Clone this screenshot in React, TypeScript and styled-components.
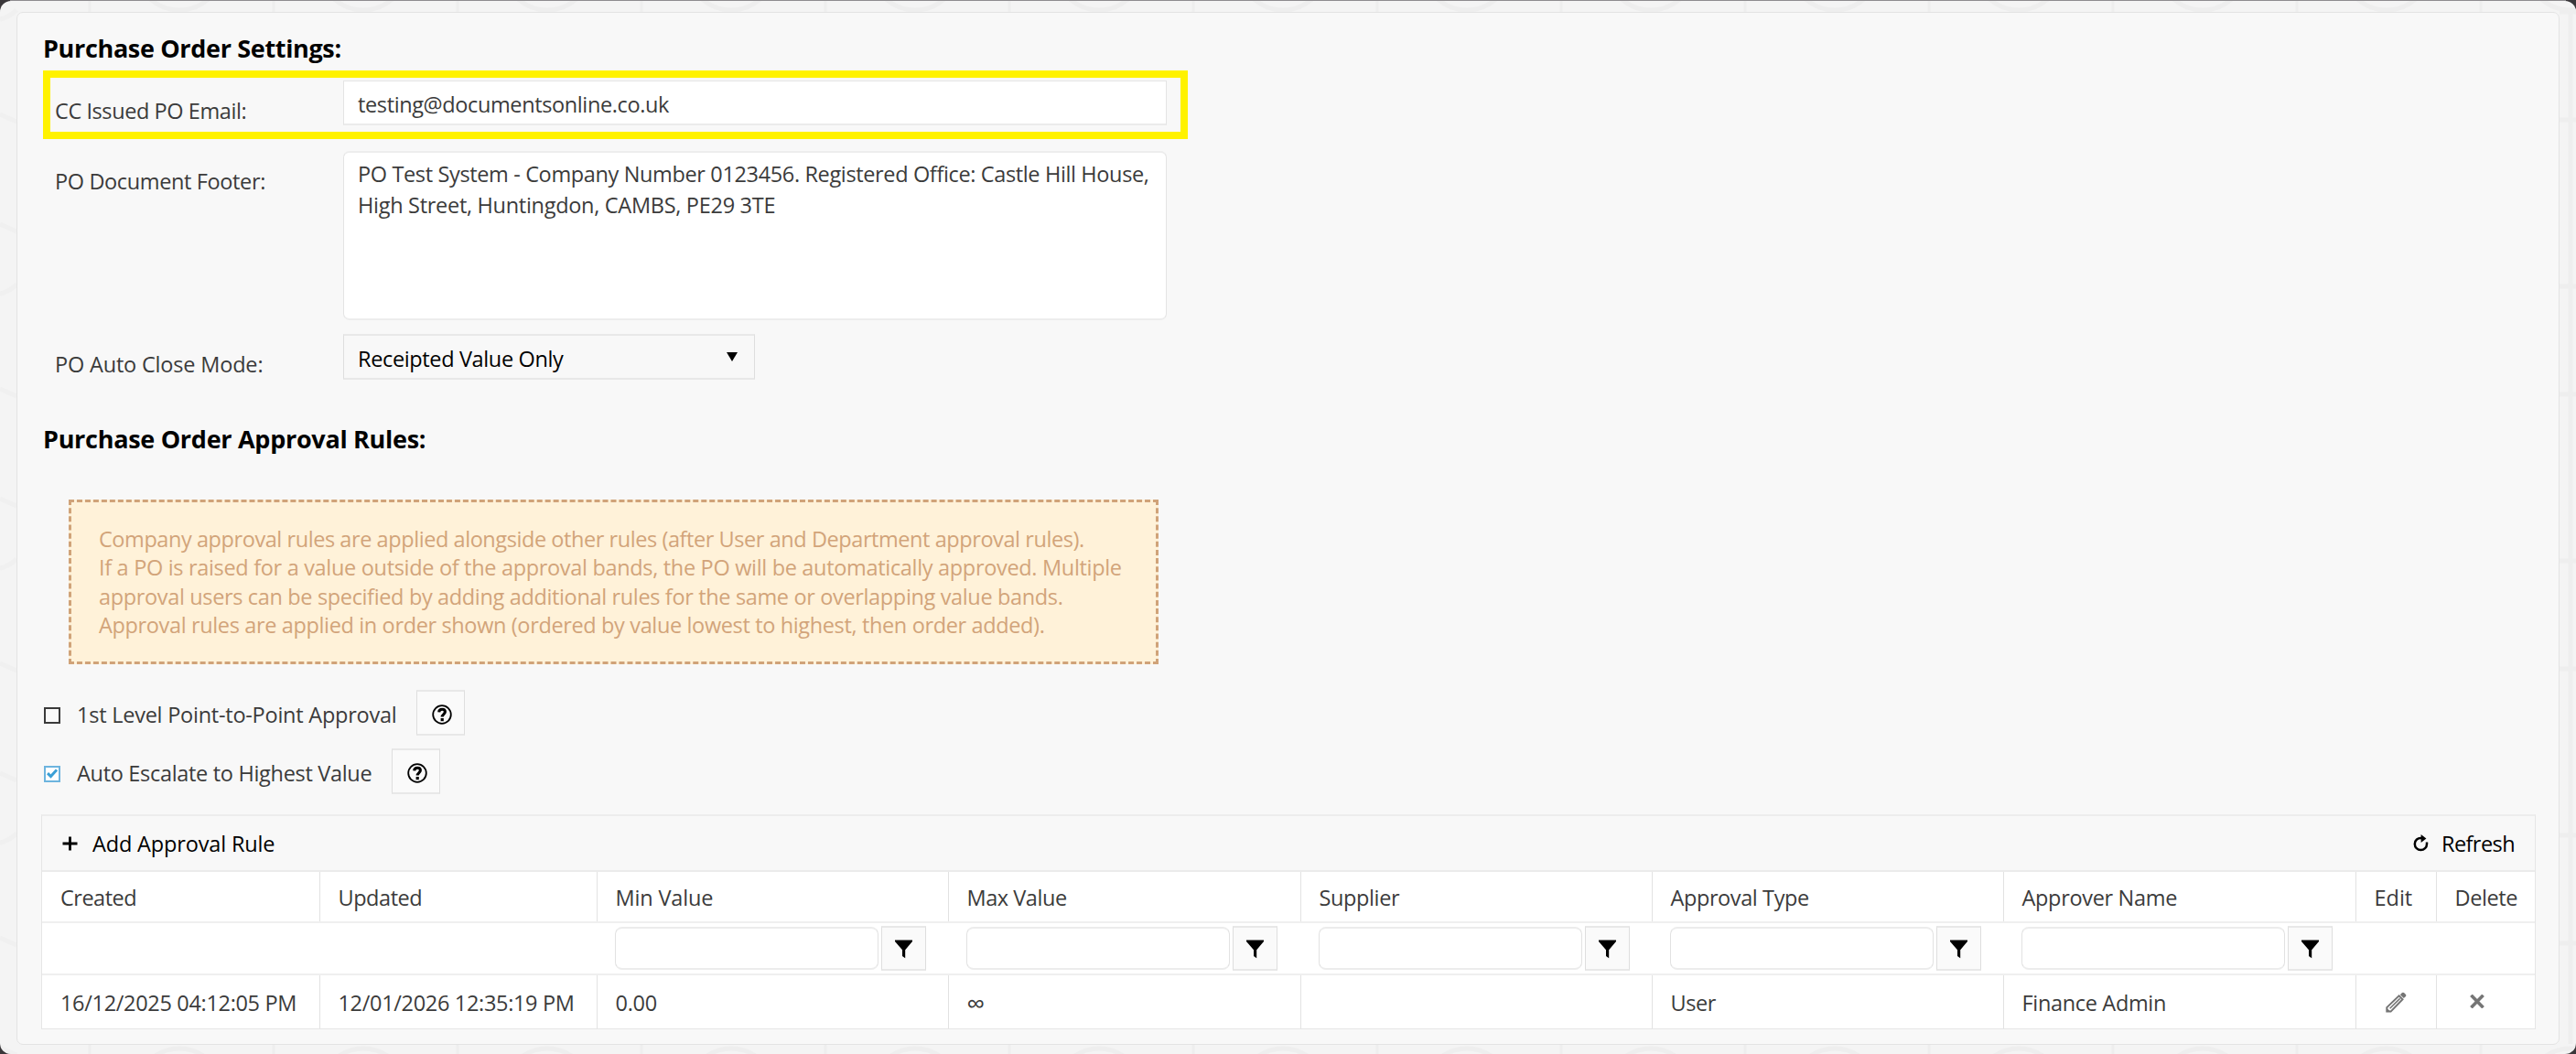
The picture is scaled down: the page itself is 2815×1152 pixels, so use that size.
import React from "react";
import styled, { createGlobalStyle } from "styled-components";

const GlobalStyle = createGlobalStyle`
  *, *::before, *::after { box-sizing: border-box; }
  body {
    margin: 0;
    background: #3a373a;
    color: #3b3b3b;
    font-family: "Open Sans", "Noto Sans", sans-serif;
    font-size: 23.5px;
    line-height: 32px;
    font-kerning: normal;
  }
`;

const Page = styled.div`
  height: 1152px;
  overflow: hidden;
  background: linear-gradient(#8e8c8f 1px, transparent 1px) 11px 0 / calc(100% - 22px) 100% no-repeat;
  padding-top: 1px;
`;

const Shell = styled.div`
  position: relative;
  height: 1151px;
  padding: 12px 18px 10px;
  border-radius: 12px;
  background: #f4f4f4;
  overflow: hidden;
`;

const Pattern = styled.svg`
  position: absolute;
  inset: 0;
  width: 100%;
  height: 100%;
`;

const Panel = styled.main`
  position: relative;
  height: 1129px;
  padding: 21px 25px 0 26px;
  border: 1px solid #e3e3e3;
  border-radius: 7px;
  background: #f8f8f8;
`;

const Txt = styled.span<{ $ls?: number }>`
  letter-spacing: ${(p) => p.$ls ?? -0.3}px;
  white-space: nowrap;
`;

const Infinite = styled(Txt)`
  font-family: "Noto Sans", "Open Sans", sans-serif;
  font-size: 28px;
`;

const Heading = styled.h2<{ $ls: number }>`
  margin: 0 0 0 2px;
  height: 36px;
  font-size: 27px;
  line-height: 36px;
  font-weight: 700;
  letter-spacing: ${(p) => p.$ls}px;
  color: #000;
`;

const FormRow = styled.div<{ $gap: number; $drop: number }>`
  display: grid;
  grid-template-columns: 315px max-content;
  align-items: start;
  margin-top: ${(p) => p.$gap}px;
  padding-left: 15px;

  > label {
    margin-top: ${(p) => p.$drop}px;
  }
`;

const HighlightRow = styled(FormRow)`
  width: 1251px;
  height: 75px;
  margin-left: 2px;
  padding: 3px 0 0 5px;
  border: 8px solid #fff200;
`;

const Field = styled.div`
  display: flex;
  flex-direction: column;
  width: 900px;
  height: 49px;
  padding: 9px 15px 0;
  border: 1px solid #e4e4e4;
  border-bottom: 2px solid #ebebeb;
  background: #fff;
`;

const AreaField = styled(Field)`
  height: 185px;
  padding: 6px 15px;
  border: 1px solid #e4e4e4;
  border-top: 2px solid #ededed;
  border-bottom: 2px solid #ededed;
  border-radius: 7px;
  line-height: 34.3px;
`;

const SelectField = styled.div`
  display: flex;
  align-items: center;
  justify-content: space-between;
  width: 450px;
  height: 50px;
  padding: 0 18px 0 15px;
  border: 1px solid #dedede;
  border-width: 2px 1px;
  border-top-color: #e8e8e8;
  border-bottom-color: #e8e8e8;
  color: #000;

  > span {
    padding-top: 3px;
  }
`;

const Notice = styled.div`
  display: flex;
  flex-direction: column;
  width: 1191px;
  height: 180px;
  margin: 48px 0 0 30px;
  padding: 25px 29px 0 30px;
  border: 3px dashed #d0a379;
  background: #fff2d9;
  color: #d2a47a;
  line-height: 31.4px;
`;

const CheckRow = styled.div<{ $gap: number }>`
  display: flex;
  align-items: center;
  height: 49px;
  margin-top: ${(p) => p.$gap}px;
  padding-left: 3px;
`;

const CheckBox = styled.span<{ $on?: boolean }>`
  display: flex;
  align-items: center;
  justify-content: center;
  width: 18px;
  height: 18px;
  margin-top: 6px;
  border: 2px solid ${(p) => (p.$on ? "#6db4de" : "#3a3a3a")};
  background: ${(p) => (p.$on ? "#fff" : "#f9f9f9")};
`;

const CheckLabel = styled.span<{ $width: number }>`
  width: ${(p) => p.$width}px;
  padding: 4px 0 0 18px;
`;

const IconButton = styled.button`
  display: flex;
  align-items: center;
  justify-content: center;
  width: 53px;
  height: 50px;
  padding: 4px 0 0 3px;
  border: 1px solid #dedede;
  border-width: 2px 1px;
  border-top-color: #e8e8e8;
  border-bottom-color: #e8e8e8;
  background: #fafafa;
  color: #000;
`;

const Grid = styled.section`
  width: 2726px;
  margin-top: 23px;
  border: 1px solid #e6e6e6;
  border-top: 2px solid #ededed;
`;

const Toolbar = styled.div`
  display: flex;
  align-items: center;
  justify-content: space-between;
  height: 61px;
  padding: 0 22px;
  border-bottom: 2px solid #ebebeb;
  background: #f8f8f8;
  color: #000;
`;

const ToolAction = styled.div<{ $gap: number }>`
  display: flex;
  align-items: center;
  gap: ${(p) => p.$gap}px;
`;

const GridRow = styled.div<{ $height: number }>`
  display: grid;
  grid-template-columns: 304px 303px 384px 385px 384px 384px 385px 88px 1fr;
  height: ${(p) => p.$height}px;
  border-bottom: 2px solid #efefef;
  background: #fff;

  &:last-child {
    border-bottom: 0;
  }
`;

const Cell = styled.div`
  display: flex;
  align-items: center;
  padding: 2px 0 0 19.5px;
  border-right: 1px solid #e2e2e2;

  &:first-child {
    padding-left: 20px;
  }

  &:last-child {
    border-right: 0;
  }
`;

const IconCell = styled(Cell)<{ $left: number; $up: number }>`
  padding: 0 0 ${(p) => p.$up}px ${(p) => p.$left}px;
  color: #757575;
`;

const FilterCell = styled.div`
  display: flex;
  align-items: center;
  gap: 3px;
  padding-left: 18.5px;
`;

const FilterInput = styled.div`
  width: 288px;
  height: 47px;
  border: 1px solid #e2e2e2;
  border-width: 2px 1px;
  border-top-color: #ececec;
  border-bottom-color: #ececec;
  border-radius: 8px;
  background: #fff;
`;

const FilterButton = styled(IconButton)`
  width: 49px;
  height: 49px;
  padding: 1px 0 0;
`;

const BackgroundPattern = () => {
  const xs = Array.from({ length: 15 }, (_, i) => 98 + i * 201);
  const ys = [-50, 250, 550, 850, 1150];
  return (
    <Pattern fill="none" stroke="#eeeeee" strokeWidth="5">
      {xs.map((x) => (
        <g key={x}>
          <path d={`M${x} 0V1151`} strokeWidth="3" />
          <circle cx={x + 98} cy="-38" r="48" />
          <circle cx={x + 98} cy="1192" r="47" />
        </g>
      ))}
      {ys.map((y) => (
        <g key={y}>
          <path d={`M0 ${y - 6}L18 ${y + 2}M0 ${y + 70}Q10 ${y + 68} 18 ${y + 60}M0 ${y - 126}L18 ${y - 118}`} strokeOpacity="0.7" />
          <path d={`M2797 ${y + 62}H2815M2797 ${y - 120}H2815`} />
        </g>
      ))}
      <path d="M2809 10V1140" />
    </Pattern>
  );
};

const HelpIcon = () => (
  <svg width="22" height="22" viewBox="0 0 22 22" fill="none" stroke="currentColor">
    <circle cx="11" cy="11" r="9.8" strokeWidth="1.8" />
    <path d="M7.7 8.3C7.9 4.2 14.4 4.4 14.4 8.1C14.4 10.6 11.2 10.6 11.2 13.6" strokeWidth="3.1" />
    <path d="M9.6 15H12.8V18.2H9.6Z" fill="currentColor" stroke="none" />
  </svg>
);

const FunnelIcon = () => (
  <svg width="19" height="21" viewBox="0 0 19 21" fill="currentColor">
    <path d="M0 0.5H19V2L11.2 11.2V20.3L8 18V11.2L0 2Z" />
  </svg>
);

const PlusIcon = () => (
  <svg width="17" height="16" viewBox="0 0 17 16" stroke="currentColor" strokeWidth="2.8">
    <path d="M8.5 0.5V15.5M0.5 8H16.5" />
  </svg>
);

const RefreshIcon = () => (
  <svg width="17" height="19" viewBox="0 0 17 19" fill="none" stroke="currentColor" strokeWidth="2.5">
    <path d="M9.6 4.1C5 3.4 1.8 6.5 1.8 10.4C1.8 14.2 4.8 17 8.4 17C12 17 15 14.2 15 10.4V8.6" />
    <path d="M8.6 0L14.4 4.4L8.6 9Z" fill="currentColor" stroke="none" />
  </svg>
);

const PencilIcon = () => (
  <svg width="23" height="23" viewBox="0 0 23 23" fill="none" stroke="currentColor">
    <path d="M1.3 21.6V17.1L14.6 4.4L18.5 8.3L5.6 21.6Z" strokeWidth="2" />
    <path d="M1 22V17.5L5.5 22Z" fill="currentColor" stroke="none" />
    <path d="M4.6 18.2L15.6 7.4" strokeWidth="1.5" />
    <path d="M15.8 3.2L18 1.1Q19 0.3 20 1.1L22 3.1Q22.8 4.1 22 5.1L19.8 7.1Z" fill="currentColor" stroke="none" />
  </svg>
);

const CrossIcon = () => (
  <svg width="16" height="15" viewBox="0 0 16 15" stroke="currentColor" strokeWidth="3.6">
    <path d="M1.4 0.8L14.6 14.2M14.6 0.8L1.4 14.2" />
  </svg>
);

const columns: [string, number][] = [
  ["Created", -0.5],
  ["Updated", -0.45],
  ["Min Value", -0.15],
  ["Max Value", -0.45],
  ["Supplier", -0.38],
  ["Approval Type", -0.4],
  ["Approver Name", -0.32],
  ["Edit", 0],
  ["Delete", -0.38],
];

const values: [string, number][] = [
  ["16/12/2025 04:12:05 PM", -0.32],
  ["12/01/2026 12:35:19 PM", -0.32],
  ["0.00", -0.25],
  ["∞", 0],
  ["", 0],
  ["User", -0.4],
  ["Finance Admin", -0.33],
];

const noticeLines: [string, number][] = [
  ["Company approval rules are applied alongside other rules (after User and Department approval rules).", -0.43],
  ["If a PO is raised for a value outside of the approval bands, the PO will be automatically approved. Multiple", -0.32],
  ["approval users can be specified by adding additional rules for the same or overlapping value bands.", -0.35],
  ["Approval rules are applied in order shown (ordered by value lowest to highest, then order added).", -0.36],
];

const filterable = [false, false, true, true, true, true, true, false, false];

const SecondHeading = styled(Heading)`
  margin-top: 47px;
`;

export default function App() {
  return (
    <Page>
      <GlobalStyle />
      <Shell>
        <BackgroundPattern />
        <Panel>
          <Heading $ls={-0.34}>Purchase Order Settings:</Heading>
          <HighlightRow $gap={6} $drop={17}>
            <label><Txt $ls={-0.42}>CC Issued PO Email:</Txt></label>
            <Field><Txt $ls={-0.38}>testing@documentsonline.co.uk</Txt></Field>
          </HighlightRow>
          <FormRow $gap={13} $drop={17}>
            <label><Txt $ls={-0.37}>PO Document Footer:</Txt></label>
            <AreaField>
              <Txt $ls={-0.36}>PO Test System - Company Number 0123456. Registered Office: Castle Hill House,</Txt>
              <Txt $ls={-0.29}>High Street, Huntingdon, CAMBS, PE29 3TE</Txt>
            </AreaField>
          </FormRow>
          <FormRow $gap={15} $drop={17}>
            <label><Txt $ls={-0.18}>PO Auto Close Mode:</Txt></label>
            <SelectField>
              <Txt $ls={-0.36}>Receipted Value Only</Txt>
              <svg width="12" height="10" viewBox="0 0 12 10"><path d="M0 0H12L6 10Z" /></svg>
            </SelectField>
          </FormRow>
          <SecondHeading $ls={-0.29}>Purchase Order Approval Rules:</SecondHeading>
          <Notice>
            {noticeLines.map(([line, ls]) => <Txt key={line} $ls={ls}>{line}</Txt>)}
          </Notice>
          <CheckRow $gap={28}>
            <CheckBox />
            <CheckLabel $width={389}><Txt $ls={-0.24}>1st Level Point-to-Point Approval</Txt></CheckLabel>
            <IconButton aria-label="Help"><HelpIcon /></IconButton>
          </CheckRow>
          <CheckRow $gap={15}>
            <CheckBox $on>
              <svg width="12" height="11" viewBox="0 0 12 11" fill="none" stroke="#3a9fd6" strokeWidth="3">
                <path d="M1 5.2L4.5 8.6L11 1.4" />
              </svg>
            </CheckBox>
            <CheckLabel $width={362}><Txt $ls={-0.31}>Auto Escalate to Highest Value</Txt></CheckLabel>
            <IconButton aria-label="Help"><HelpIcon /></IconButton>
          </CheckRow>
          <Grid>
            <Toolbar>
              <ToolAction $gap={16}><PlusIcon /><Txt $ls={-0.15}>Add Approval Rule</Txt></ToolAction>
              <ToolAction $gap={14}><RefreshIcon /><Txt $ls={-0.57}>Refresh</Txt></ToolAction>
            </Toolbar>
            <GridRow $height={56}>
              {columns.map(([name, ls]) => <Cell key={name}><Txt $ls={ls}>{name}</Txt></Cell>)}
            </GridRow>
            <GridRow $height={57}>
              {filterable.map((on, i) => (
                <FilterCell key={i}>
                  {on && <FilterInput />}
                  {on && <FilterButton aria-label="Filter"><FunnelIcon /></FilterButton>}
                </FilterCell>
              ))}
            </GridRow>
            <GridRow $height={58}>
              {values.map(([value, ls], i) => (
                <Cell key={i}>
                  {value === "∞" ? <Infinite $ls={ls}>{value}</Infinite> : <Txt $ls={ls}>{value}</Txt>}
                </Cell>
              ))}
              <IconCell $left={32} $up={0}><PencilIcon /></IconCell>
              <IconCell $left={36} $up={1}><CrossIcon /></IconCell>
            </GridRow>
          </Grid>
        </Panel>
      </Shell>
    </Page>
  );
}
